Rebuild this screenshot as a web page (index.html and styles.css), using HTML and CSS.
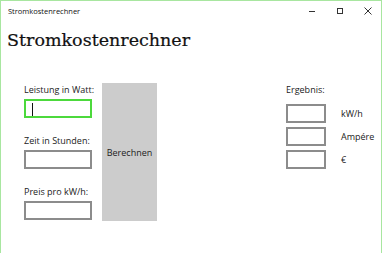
FILE: index.html
```html
<!DOCTYPE html>
<html lang="de">
<head>
  <meta charset="UTF-8" />
  <meta name="viewport" content="width=device-width, initial-scale=1.0"/>
  <title>Stromkostenrechner</title>
  <link rel="stylesheet" href="styles.css">
</head>
<body>
  <div class="window">
    <div class="titlebar">
      <span class="title-text">Stromkostenrechner</span>
      <div class="controls">
        <svg class="ctrl" width="10" height="10" viewBox="0 0 10 10"><line x1="2" y1="5.5" x2="8" y2="5.5" stroke="#333" stroke-width="1"/></svg>
        <svg class="ctrl" width="10" height="10" viewBox="0 0 10 10"><rect x="2.5" y="2.5" width="5" height="5" fill="none" stroke="#333" stroke-width="1"/></svg>
        <svg class="ctrl" width="10" height="10" viewBox="0 0 10 10"><path d="M1.5 1.5 L8.5 8.5 M8.5 1.5 L1.5 8.5" stroke="#333" stroke-width="1"/></svg>
      </div>
    </div>

    <h1>Stromkostenrechner</h1>

    <div class="main">
      <div class="fields">
        <div class="field">
          <label>Leistung in Watt:</label>
          <div class="box focus"><span class="caret"></span></div>
        </div>
        <div class="field">
          <label>Zeit in Stunden:</label>
          <div class="box"></div>
        </div>
        <div class="field">
          <label>Preis pro kW/h:</label>
          <div class="box"></div>
        </div>
      </div>

      <button class="calc">Berechnen</button>

      <div class="result">
        <label>Ergebnis:</label>
        <div class="row"><div class="box small"></div><span>kW/h</span></div>
        <div class="row"><div class="box small"></div><span>Ampére</span></div>
        <div class="row"><div class="box small"></div><span>€</span></div>
      </div>
    </div>
  </div>
</body>
</html>
```

FILE: styles.css
```css
body {
  margin: 0;
  font-family: "Open Sans", "Noto Sans", sans-serif;
  background: white;
  color: #222;
}

.window {
  width: 380px;
  height: 252px;
  border: 1px solid #a8e6a0;
  border-bottom: none;
  background: white;
}

.titlebar {
  display: flex;
  align-items: center;
  height: 20px;
  padding-left: 7px;
}

.title-text {
  font-size: 7.5px;
  color: #111;
}

.controls {
  margin-left: auto;
  display: flex;
  gap: 18px;
  padding-right: 8px;
}

h1 {
  font-family: "DejaVu Serif", serif;
  font-weight: normal;
  font-size: 17.5px;
  margin: 9px 0 0 6px;
  color: #111;
  -webkit-text-stroke: 0.2px #111;
}

.main {
  display: flex;
  margin-top: 33px;
}

.fields {
  margin-left: 23px;
  margin-top: 1px;
  width: 68px;
}

label {
  display: block;
  font-size: 9px;
  line-height: 12px;
  margin-bottom: 3px;
  color: #222;
  white-space: nowrap;
}

.field {
  margin-bottom: 17px;
}

.box {
  box-sizing: border-box;
  height: 19px;
  border: 2px solid #8c8c8c;
  background: white;
  position: relative;
}

.box.focus {
  border-color: #4cd93c;
}

.caret {
  position: absolute;
  left: 6px;
  top: 2px;
  width: 1px;
  height: 13px;
  background: #111;
}

.calc {
  width: 55px;
  height: 138px;
  margin-left: 10px;
  background: #cccccc;
  border: none;
  font-family: "Open Sans", "Noto Sans", sans-serif;
  font-size: 9px;
  color: #222;
  padding: 0;
}

.result {
  margin-left: 129px;
  margin-top: 1px;
}

.result label {
  margin-bottom: 8px;
}

.row {
  display: flex;
  align-items: center;
  margin-bottom: 4px;
  font-size: 9px;
}

.box.small {
  width: 40px;
  margin-right: 15px;
}
```
